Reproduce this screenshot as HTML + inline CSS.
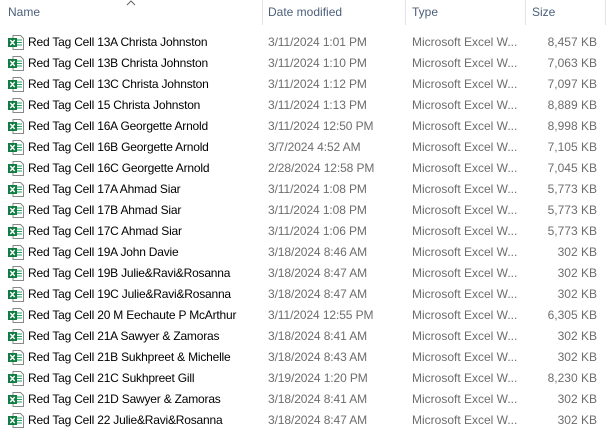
<!DOCTYPE html><html><head><style>
body{margin:0;width:609px;height:445px;background:#fff;font-family:"Liberation Sans",sans-serif;font-size:12px;position:relative;overflow:hidden}
.h{position:absolute;top:5px;color:#4c607a;font-size:12px}
.d{position:absolute;top:0;width:1px;height:25px;background:#e5e5e5}
.r{position:absolute;left:0;width:609px;height:21px;line-height:21px}
.r span{position:absolute;white-space:nowrap}
.n{left:28px;color:#000;letter-spacing:-0.2px}
.t{left:268px;color:#6d6d6d;letter-spacing:-0.1px}
.y{left:412px;color:#6d6d6d}
.s{right:12px;color:#6d6d6d}
.i{position:absolute;left:8px;top:3px;width:16px;height:15px}
</style></head><body>
<div class="h" style="left:8px">Name</div>
<div class="h" style="left:268px">Date modified</div>
<div class="h" style="left:412px">Type</div>
<div class="h" style="left:532px">Size</div>
<svg style="position:absolute;left:126px;top:0" width="10" height="6"><path d="M1 5 L5 1 L9 5" stroke="#666" fill="none"/></svg>
<div class="d" style="left:262px"></div><div class="d" style="left:405px"></div><div class="d" style="left:525px"></div><div class="d" style="left:605px"></div>
<div id="rows"></div>
<script>
var d=[["Red Tag Cell 13A Christa Johnston","3/11/2024 1:01 PM","8,457 KB"],
["Red Tag Cell 13B Christa Johnston","3/11/2024 1:10 PM","7,063 KB"],
["Red Tag Cell 13C Christa Johnston","3/11/2024 1:12 PM","7,097 KB"],
["Red Tag Cell 15 Christa Johnston","3/11/2024 1:13 PM","8,889 KB"],
["Red Tag Cell 16A Georgette Arnold","3/11/2024 12:50 PM","8,998 KB"],
["Red Tag Cell 16B Georgette Arnold","3/7/2024 4:52 AM","7,105 KB"],
["Red Tag Cell 16C Georgette Arnold","2/28/2024 12:58 PM","7,045 KB"],
["Red Tag Cell 17A Ahmad Siar","3/11/2024 1:08 PM","5,773 KB"],
["Red Tag Cell 17B Ahmad Siar","3/11/2024 1:08 PM","5,773 KB"],
["Red Tag Cell 17C Ahmad Siar","3/11/2024 1:06 PM","5,773 KB"],
["Red Tag Cell 19A John Davie","3/18/2024 8:46 AM","302 KB"],
["Red Tag Cell 19B Julie&Ravi&Rosanna","3/18/2024 8:47 AM","302 KB"],
["Red Tag Cell 19C Julie&Ravi&Rosanna","3/18/2024 8:47 AM","302 KB"],
["Red Tag Cell 20 M Eechaute P McArthur","3/11/2024 12:55 PM","6,305 KB"],
["Red Tag Cell 21A Sawyer & Zamoras","3/18/2024 8:41 AM","302 KB"],
["Red Tag Cell 21B Sukhpreet & Michelle","3/18/2024 8:43 AM","302 KB"],
["Red Tag Cell 21C Sukhpreet Gill","3/19/2024 1:20 PM","8,230 KB"],
["Red Tag Cell 21D Sawyer & Zamoras","3/18/2024 8:41 AM","302 KB"],
["Red Tag Cell 22 Julie&Ravi&Rosanna","3/18/2024 8:47 AM","302 KB"]];
var h="";
d.forEach(function(r,i){
h+='<div class="r" style="top:'+(32+i*21)+'px"><svg class="i" viewBox="0 0 16 15"><path d="M5 0.5H12.5L15.5 3.5V14.5H5Z" fill="#fff" stroke="#888"/><path d="M9 5h5M9 7.5h5M9 10h5" stroke="#21a366"/><rect x="0" y="3" width="9" height="9" fill="#107c41"/><path d="M2.3 5L6.7 10M6.7 5L2.3 10" stroke="#fff" stroke-width="1.4"/></svg><span class="n">'+r[0].replace(/&/g,"&amp;")+'</span><span class="t">'+r[1]+'</span><span class="y">Microsoft Excel W...</span><span class="s">'+r[2]+'</span></div>';});
document.getElementById("rows").innerHTML=h;
</script>
</body></html>
